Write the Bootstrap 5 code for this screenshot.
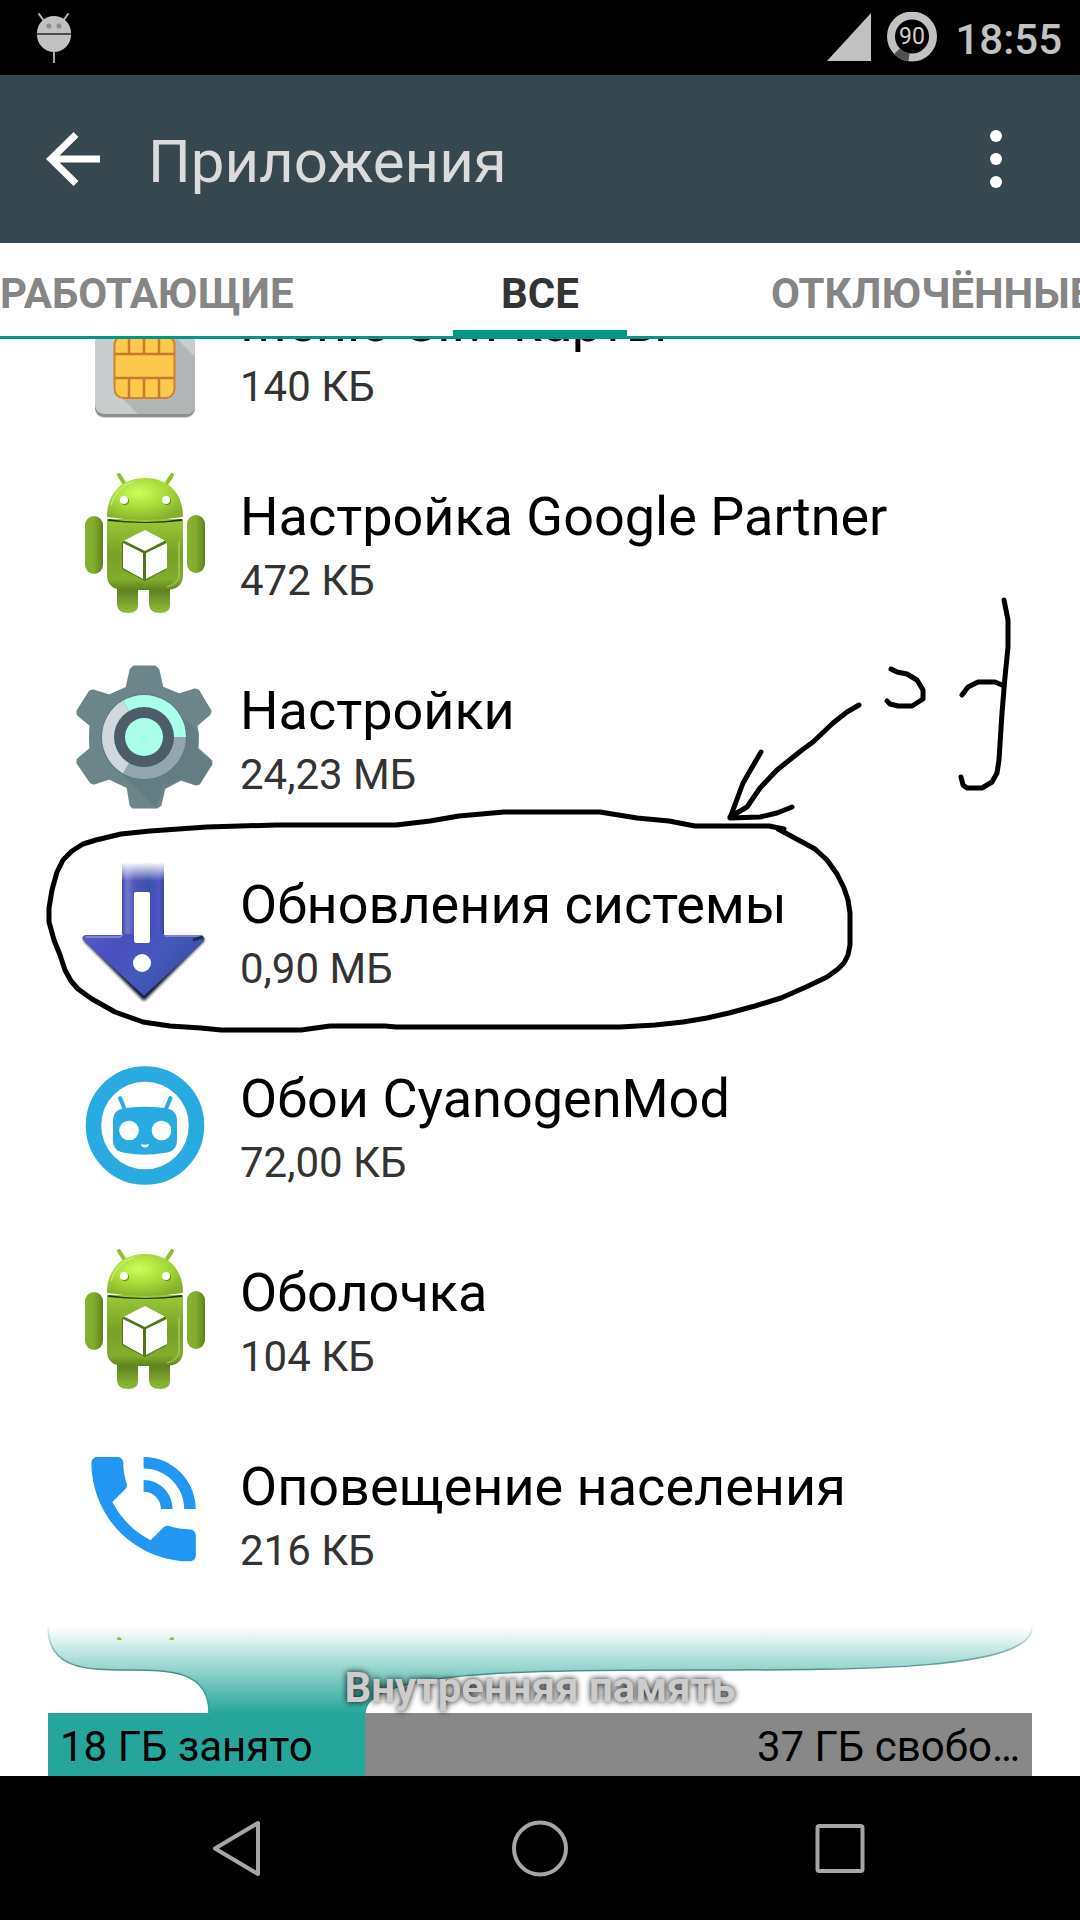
<!DOCTYPE html>
<html lang="ru">
<head>
<meta charset="utf-8">
<meta name="viewport" content="width=device-width, initial-scale=1">
<title>Приложения</title>
<link href="https://cdn.jsdelivr.net/npm/bootstrap@5.3.0/dist/css/bootstrap.min.css" rel="stylesheet">
<style>
  body { font-family: Roboto, "Noto Sans", sans-serif; color: #000; background: #fff; }
  svg { display: block; }
  .status-bar { height: 75px; padding: 0 18px 0 36px; background: #000; color: #c1c1c1; }
  .clock { font-size: 42px; line-height: 48px; font-weight: 500; padding: 4px 0 0 2px; }
  .app-bar { height: 168px; padding: 2px 48px 0 36px; background: #37474f; }
  .app-bar h1 { font-size: 60px; line-height: 72px; padding: 4px 0 0 40px; color: #dbdbdb; font-weight: 400; }
  .icon-btn { background: none; border: 0; padding: 0; color: #fff; }
  .tab-strip { height: 96px; border-bottom: 3px solid #009688; background: #fff; }
  .tab-strip .nav-link { height: 96px; padding: 0; font-size: 42px; line-height: 102px; font-weight: 700; color: #858585; white-space: nowrap; }
  .tab-side { flex: 1 1 0; min-width: 0; }
  .tab-strip .tab-next { padding-left: 144px; }
  .tab-strip .tab-current { width: 174px; color: #333; border-radius: 0; border-bottom: 9px solid #009688; }
  .list-view { min-height: 0; z-index: 1; }
  .app-list { margin-top: -87px; }
  .app-row { height: 194px; padding: 0 72px; gap: 24px; background: none; color: #000; }
  .app-icon { width: 144px; height: 144px; }
  .app-text { padding-top: 5px; gap: 3px; }
  .app-name { font-size: 54px; line-height: 68px; }
  .app-size { font-size: 42px; line-height: 54px; color: #333; }
  .storage { padding: 0 48px; margin-top: -13px; }
  .funnel { width: 100%; height: 86px; overflow: visible; }
  .storage-title { font-size: 42px; line-height: 50px; color: #ccc; text-shadow: 0 0 6px #000; bottom: 0; }
  .storage-bar { height: 63px; background: #888; font-size: 42px; line-height: 67px; color: #000; }
  .storage-used { background: #26a69a; }
  .storage-bar span { padding: 0 12px; }
  .nav-keys { height: 144px; padding: 0 90px; background: #000; }
  .nav-keys .icon-btn { color: #a6a6a6; }
  .ink { pointer-events: none; z-index: 2; }
</style>
<script src="https://cdn.jsdelivr.net/npm/bootstrap@5.3.0/dist/js/bootstrap.bundle.min.js"></script>
</head>
<body>
<svg width="0" height="0" class="position-absolute" aria-hidden="true">
  <defs>
    <radialGradient id="gHead" cx=".42" cy=".35" r=".7"><stop offset="0" stop-color="#ccff5c"/><stop offset=".5" stop-color="#a9dc38"/><stop offset="1" stop-color="#84ae2c"/></radialGradient>
    <linearGradient id="gBody" x1="0" y1="0" x2="0" y2="1"><stop offset="0" stop-color="#9aca37"/><stop offset=".5" stop-color="#789f27"/><stop offset=".85" stop-color="#83ad2c"/><stop offset="1" stop-color="#5f821c"/></linearGradient>
    <linearGradient id="gArm" x1="0" y1="0" x2="1" y2="0"><stop offset="0" stop-color="#86b32e"/><stop offset=".5" stop-color="#84ac30"/><stop offset="1" stop-color="#5f7f1c"/></linearGradient>
    <linearGradient id="gLeg" x1="0" y1="0" x2="0" y2="1"><stop offset="0" stop-color="#51701a"/><stop offset="1" stop-color="#91bd39"/></linearGradient>
    <symbol id="droid" viewBox="0 0 144 144">
      <path d="M47 4l7 11M100 4l-7 11" stroke="#93c030" stroke-width="4" stroke-linecap="round"/>
      <path d="M45 112h21v22q0 8-10 8t-11-8zM77 112h21v22q0 8-10 8t-11-8z" fill="url(#gLeg)"/>
      <rect x="13" y="45" width="18" height="58" rx="9" fill="url(#gArm)"/>
      <rect x="115" y="44" width="18" height="58" rx="9" fill="url(#gArm)"/>
      <path d="M35 48h76v56q0 15-18 15H53q-18 0-18-15z" fill="url(#gBody)"/>
      <path d="M36 48q37 6 74 0v2q-37 4-74 0z" fill="#26380a"/>
      <path d="M35 46C35 22 50 7 73 7s38 15 38 39q-38 6-76 0z" fill="url(#gHead)"/>
      <path d="M39 34Q44 16 62 10" fill="none" stroke="#d6f58b" stroke-width="1"/>
      <path d="M107 70v36q-3 8-12 10" fill="none" stroke="#a5c85c" stroke-width="2" opacity=".7"/>
      <circle cx="53" cy="30" r="4" fill="#658c20"/><circle cx="95" cy="30" r="4" fill="#658c20"/>
      <circle cx="52" cy="29" r="4" fill="#fff"/><circle cx="94" cy="29" r="4" fill="#fff"/>
      <path d="M73 60l21 10.500v28L73 110 50 98V71z" fill="#466414" opacity=".75"/>
      <path d="M73 59l20 10.500L73 80 52 69.500zM51 72l20 10v26L51 97zM74 82l21-10v25l-21 11z" fill="#fff"/>
    </symbol>
  </defs>
</svg>

<div class="vh-100 d-flex flex-column position-relative overflow-hidden">
  <div class="status-bar d-flex align-items-center justify-content-between flex-shrink-0">
    <svg width="36" height="52" viewBox="0 0 36 52" aria-label="Уведомление">
      <path d="M3 2l5 7M32 2l-5 7" stroke="#b8b8b8" stroke-width="2" stroke-linecap="round"/>
      <path d="M1 21a17 17 0 0 1 34 0zM1 23h34a17 17 0 0 1-34 0z" fill="#c1c1c1"/>
      <path d="M1 22h34" stroke="#999" stroke-width="1"/>
      <path d="M18 39v12" stroke="#a8a8a8" stroke-width="2"/>
      <circle cx="13" cy="14" r="2.500" fill="#8d8d8d"/><circle cx="23" cy="14" r="2.500" fill="#8d8d8d"/>
    </svg>
    <div class="d-flex align-items-center">
      <svg class="me-3" width="44" height="50" viewBox="0 0 44 50" aria-label="Сеть"><path d="M0 48L44 0v48z" fill="#c1c1c1"/></svg>
      <svg class="me-3" width="50" height="52" viewBox="0 0 50 52" aria-label="Батарея">
        <circle cx="25" cy="24.500" r="21" fill="none" stroke="#c1c1c1" stroke-width="8"/>
        <path d="M22 45.300A21 21 0 0 1 10 39.300" fill="none" stroke="#505050" stroke-width="8"/>
        <text x="25" y="32" font-size="23" font-weight="400" text-anchor="middle" fill="#d0d0d0">90</text>
      </svg>
      <span class="clock">18:55</span>
    </div>
  </div>

  <header class="app-bar d-flex align-items-center flex-shrink-0">
    <button class="icon-btn" type="button" aria-label="Назад">
      <svg width="72" height="72" viewBox="0 0 72 72" fill="none" stroke="currentColor" stroke-width="7"><path d="M64 35H16M40 10.500L15 35l25 24.500"/></svg>
    </button>
    <h1 class="m-0 flex-grow-1">Приложения</h1>
    <button class="icon-btn" type="button" aria-label="Меню">
      <svg width="72" height="72" viewBox="0 0 72 72" fill="currentColor"><circle cx="36" cy="12" r="6"/><circle cx="36" cy="35" r="6"/><circle cx="36" cy="58" r="6"/></svg>
    </button>
  </header>

  <nav class="tab-strip nav flex-nowrap flex-shrink-0 position-relative z-1">
    <div class="tab-side overflow-hidden"><a class="nav-link" href="#running">РАБОТАЮЩИЕ</a></div>
    <a class="nav-link tab-current text-center" href="#all" aria-current="page">ВСЕ</a>
    <div class="tab-side overflow-hidden"><a class="nav-link tab-next" href="#disabled">ОТКЛЮЧЁННЫЕ</a></div>
  </nav>

  <main class="list-view flex-grow-1 overflow-hidden position-relative">
    <div class="app-list list-group list-group-flush">
      <a href="#sim" class="app-row list-group-item border-0 d-flex align-items-center">
        <svg class="app-icon flex-shrink-0" viewBox="0 0 144 144" aria-hidden="true">
          <rect x="23" y="8" width="100" height="133" rx="9" fill="#cfd0d0"/>
          <rect x="23" y="8" width="100" height="132" rx="9" fill="#8d8f8f"/>
          <rect x="23" y="8" width="100" height="129" rx="9" fill="#c9cccc"/>
          <path d="M103 60l20 20v48q0 9-9 9H66L48 119z" fill="#b3b6b6"/>
          <rect x="42.500" y="59" width="60" height="62" rx="9" fill="#fcc94d" stroke="#d0822a" stroke-width="2"/>
          <path d="M43 77h59M43 101h59M57 59v18M72 59v18M87 59v18M57 101v20M72 101v20M87 101v20" stroke="#c87a2b" stroke-width="2.500"/>
        </svg>
        <div class="app-text d-flex flex-column"><span class="app-name">Меню SIM-карты</span><span class="app-size">140 КБ</span></div>
      </a>
      <a href="#partner" class="app-row list-group-item border-0 d-flex align-items-center">
        <svg class="app-icon flex-shrink-0" aria-hidden="true"><use href="#droid"/></svg>
        <div class="app-text d-flex flex-column"><span class="app-name">Настройка Google Partner</span><span class="app-size">472 КБ</span></div>
      </a>
      <a href="#settings" class="app-row list-group-item border-0 d-flex align-items-center">
        <svg class="app-icon flex-shrink-0" viewBox="0 0 144 144" aria-hidden="true">
          <path d="M62 2h21l3 3 4 18 17 7 16-5 3 1 12 20-1 3-13 11q2 12 0 24l14 12 1 3-12 19-3 1-15-5-17 9-4 17-3 2H61l-2-2-3-18-19-9-15 5-3-1L6 98v-3l13-11q-1-12 0-24L6 49v-3l12-19 3-1 16 5 18-8 4-18z" fill="#6c858a" stroke="#6c858a" stroke-width="3" stroke-linejoin="round"/>
          <path d="M108 49l19 18v16l14 13-14 24-17-6-19 9-7 20L48 107z" fill="#5f787e" opacity=".6"/>
          <circle cx="72" cy="72" r="43" fill="#5a757b"/>
          <path d="M72 72L51 35.600A42 42 0 0 1 114 72z" fill="#a9ffea"/>
          <path d="M72 72h42a42 42 0 0 1-63 36.400z" fill="#93a5af"/>
          <path d="M72 72L51 108.400a42 42 0 0 1 0-72.800z" fill="#cfd8dc"/>
          <circle cx="72" cy="72" r="30" fill="#4c5d69"/><circle cx="72" cy="72" r="19" fill="#a9ffea"/>
        </svg>
        <div class="app-text d-flex flex-column"><span class="app-name">Настройки</span><span class="app-size">24,23 МБ</span></div>
      </a>
      <a href="#updates" class="app-row list-group-item border-0 d-flex align-items-center">
        <svg class="app-icon flex-shrink-0" viewBox="0 0 144 144" aria-hidden="true">
          <defs>
            <linearGradient id="gArrow" x1="0" y1="0" x2="1" y2="1"><stop offset="0" stop-color="#6a6cc8"/><stop offset=".45" stop-color="#4a4fc0"/><stop offset=".65" stop-color="#4658bd"/><stop offset="1" stop-color="#2a4a8c"/></linearGradient>
            <linearGradient id="gFade" x1="0" y1="3" x2="0" y2="22" gradientUnits="userSpaceOnUse"><stop offset="0" stop-color="#fff"/><stop offset="1" stop-color="#fff" stop-opacity="0"/></linearGradient>
            <linearGradient id="gShaft" x1="0" y1="0" x2="1" y2="0"><stop offset="0" stop-color="#4446a8"/><stop offset=".12" stop-color="#7478cc"/><stop offset=".3" stop-color="#5154b8"/><stop offset=".65" stop-color="#3a52a8"/><stop offset=".88" stop-color="#5053c6"/><stop offset="1" stop-color="#2f4a9c"/></linearGradient>
            <filter id="soft" x="-10%" y="-10%" width="120%" height="130%"><feGaussianBlur stdDeviation="1.500"/></filter>
          </defs>
          <path d="M11 81l61 61 61-61z" fill="#070a20" filter="url(#soft)"/>
          <path d="M50 3h42v73h37q5 2 3 6L72 137 12 82q-4-4 1-6h37z" fill="url(#gArrow)"/>
          <path d="M50 3h42v72H50z" fill="url(#gShaft)"/>
          <path d="M14 78h34l3-3M93 77h36" fill="none" stroke="#9294dc" stroke-width="1.500"/>
          <path d="M121 81l10-3" stroke="#1c2c5c" stroke-width="3"/>
          <path d="M48 0h46v26H48z" fill="url(#gFade)"/>
          <rect x="62" y="33" width="16" height="51" rx="2" fill="#fff"/><circle cx="70" cy="104" r="9" fill="#fff"/>
        </svg>
        <div class="app-text d-flex flex-column"><span class="app-name">Обновления системы</span><span class="app-size">0,90 МБ</span></div>
      </a>
      <a href="#wallpapers" class="app-row list-group-item border-0 d-flex align-items-center">
        <svg class="app-icon flex-shrink-0" viewBox="0 0 144 144" aria-hidden="true">
          <circle cx="73" cy="72.500" r="51.500" fill="none" stroke="#29abe2" stroke-width="15.500"/>
          <path d="M48 45l5 12M98.500 45l-5 12" stroke="#29abe2" stroke-width="4" stroke-linecap="round"/>
          <path d="M41 68q0-12 13-13 19-2.500 38 0 13 1 13 13v19q0 12-13 13-19 3.500-38 0-13-1-13-13z" fill="#29abe2"/>
          <circle cx="57" cy="77.500" r="9.800" fill="#fff"/><circle cx="89.500" cy="77.500" r="9.800" fill="#fff"/>
          <path d="M69 91q4 1.500 8 0-.5 3.500-4 3.500T69 91z" fill="#fff"/>
        </svg>
        <div class="app-text d-flex flex-column"><span class="app-name">Обои CyanogenMod</span><span class="app-size">72,00 КБ</span></div>
      </a>
      <a href="#shell" class="app-row list-group-item border-0 d-flex align-items-center">
        <svg class="app-icon flex-shrink-0" aria-hidden="true"><use href="#droid"/></svg>
        <div class="app-text d-flex flex-column"><span class="app-name">Оболочка</span><span class="app-size">104 КБ</span></div>
      </a>
      <a href="#alerts" class="app-row list-group-item border-0 d-flex align-items-center">
        <svg class="app-icon flex-shrink-0" viewBox="0 0 144 144" aria-hidden="true">
          <path transform="translate(2 -1.500) scale(5.8)" fill="#2196f3" d="M20 15.500c-1.250 0-2.450-.2-3.570-.57-.1-.03-.21-.05-.31-.05-.26 0-.51.1-.71.29l-2.200 2.200c-2.830-1.440-5.150-3.750-6.590-6.590l2.200-2.210c.28-.26.36-.65.25-1C8.700 6.450 8.500 5.250 8.500 4c0-.55-.45-1-1-1H4c-.55 0-1 .45-1 1 0 9.390 7.610 17 17 17 .55 0 1-.45 1-1v-3.500c0-.55-.45-1-1-1zM19 12h2c0-4.970-4.030-9-9-9v2c3.870 0 7 3.130 7 7zm-4 0h2c0-2.760-2.240-5-5-5v2c1.660 0 3 1.340 3 3z"/>
        </svg>
        <div class="app-text d-flex flex-column"><span class="app-name">Оповещение населения</span><span class="app-size">216 КБ</span></div>
      </a>
      <div class="app-row list-group-item border-0 d-flex align-items-center" aria-hidden="true">
        <svg class="app-icon flex-shrink-0"><use href="#droid"/></svg>
      </div>
    </div>
  </main>

  <section class="storage flex-shrink-0" aria-label="Внутренняя память">
    <div class="position-relative">
      <svg class="funnel" viewBox="0 0 984 86" preserveAspectRatio="none" aria-hidden="true">
        <defs>
          <linearGradient id="gFunnel" x1="0" y1="0" x2="0" y2="1"><stop offset="0" stop-color="#26a69a" stop-opacity="0"/><stop offset="1" stop-color="#26a69a"/></linearGradient>
          <linearGradient id="gEdge" x1="0" y1="0" x2="0" y2="86" gradientUnits="userSpaceOnUse"><stop offset="0" stop-color="#4d8f88" stop-opacity=".1"/><stop offset=".5" stop-color="#4d8f88"/><stop offset="1" stop-color="#26a69a"/></linearGradient>
        </defs>
        <path d="M161 86C161 0 0 86 0 0h984C984 86 317 0 317 86z" fill="url(#gFunnel)"/>
        <path d="M161 86C161 0 0 86 0 0M984 0C984 86 317 0 317 86" fill="none" stroke="url(#gEdge)" stroke-width="1.500"/>
      </svg>
      <div class="storage-title position-absolute w-100 text-center fw-bold">Внутренняя память</div>
    </div>
    <div class="storage-bar d-flex">
      <div class="storage-used d-flex" style="width: 32.2%"><span>18 ГБ занято</span></div>
      <span class="ms-auto">37 ГБ свобо…</span>
    </div>
  </section>

  <nav class="nav-keys d-flex flex-shrink-0" aria-label="Системная навигация">
    <button class="icon-btn flex-fill d-flex justify-content-center align-items-center" type="button" aria-label="Назад">
      <svg width="64" height="64" viewBox="0 0 64 64" fill="none" stroke="currentColor" stroke-width="4" stroke-linejoin="round"><path d="M50 7v51L7 32.500z"/></svg>
    </button>
    <button class="icon-btn flex-fill d-flex justify-content-center align-items-center" type="button" aria-label="Домой">
      <svg width="64" height="64" viewBox="0 0 64 64" fill="none" stroke="currentColor" stroke-width="4"><circle cx="32" cy="32.500" r="26"/></svg>
    </button>
    <button class="icon-btn flex-fill d-flex justify-content-center align-items-center" type="button" aria-label="Недавние">
      <svg width="64" height="64" viewBox="0 0 64 64" fill="none" stroke="currentColor" stroke-width="4"><rect x="9.500" y="10" width="45" height="45" rx="2"/></svg>
    </button>
  </nav>

  <svg class="ink position-absolute top-0 start-0 w-100 h-100" viewBox="0 0 1080 1920" fill="none" stroke="#000" stroke-width="5" stroke-linecap="round" stroke-linejoin="round" aria-hidden="true">
    <path d="M784 829L769 826 695 826 669 821 637 818 600 812H504L459 816 430 821 396 825H276L207 827 150 831 121 834 96 840 83 844 72 851 63 860 57 872 52 890 49 908V922L54 940 60 955 65 970 71 981 78 989 92 999 115 1012 143 1022 170 1026 201 1028 221 1030H301L330 1026H385L396 1027H620L655 1025 683 1022 707 1018 729 1013 755 1006 781 998 806 987 827 977 838 969 844 963 848 955 850 945V913L848 900 844 888 837 874 827 860 815 849 804 843 778 829"/>
    <path d="M859 705L847 712 833 723 813 742 802 750 777 770 760 788 747 807 730 817M761 752L743 783 736 802 730 818 760 817 777 813 792 807"/>
    <path d="M891 669L897 672 907 674 917 680 923 690V699L912 706H898L890 704 887 701"/>
    <path d="M1004 600L1008 620V647L1005 677 1002 713 999 760 997 773 992 782 982 788H967L963 785 961 777M962 695L968 687 978 682H995L1002 685"/>
  </svg>
</div>
</body>
</html>
